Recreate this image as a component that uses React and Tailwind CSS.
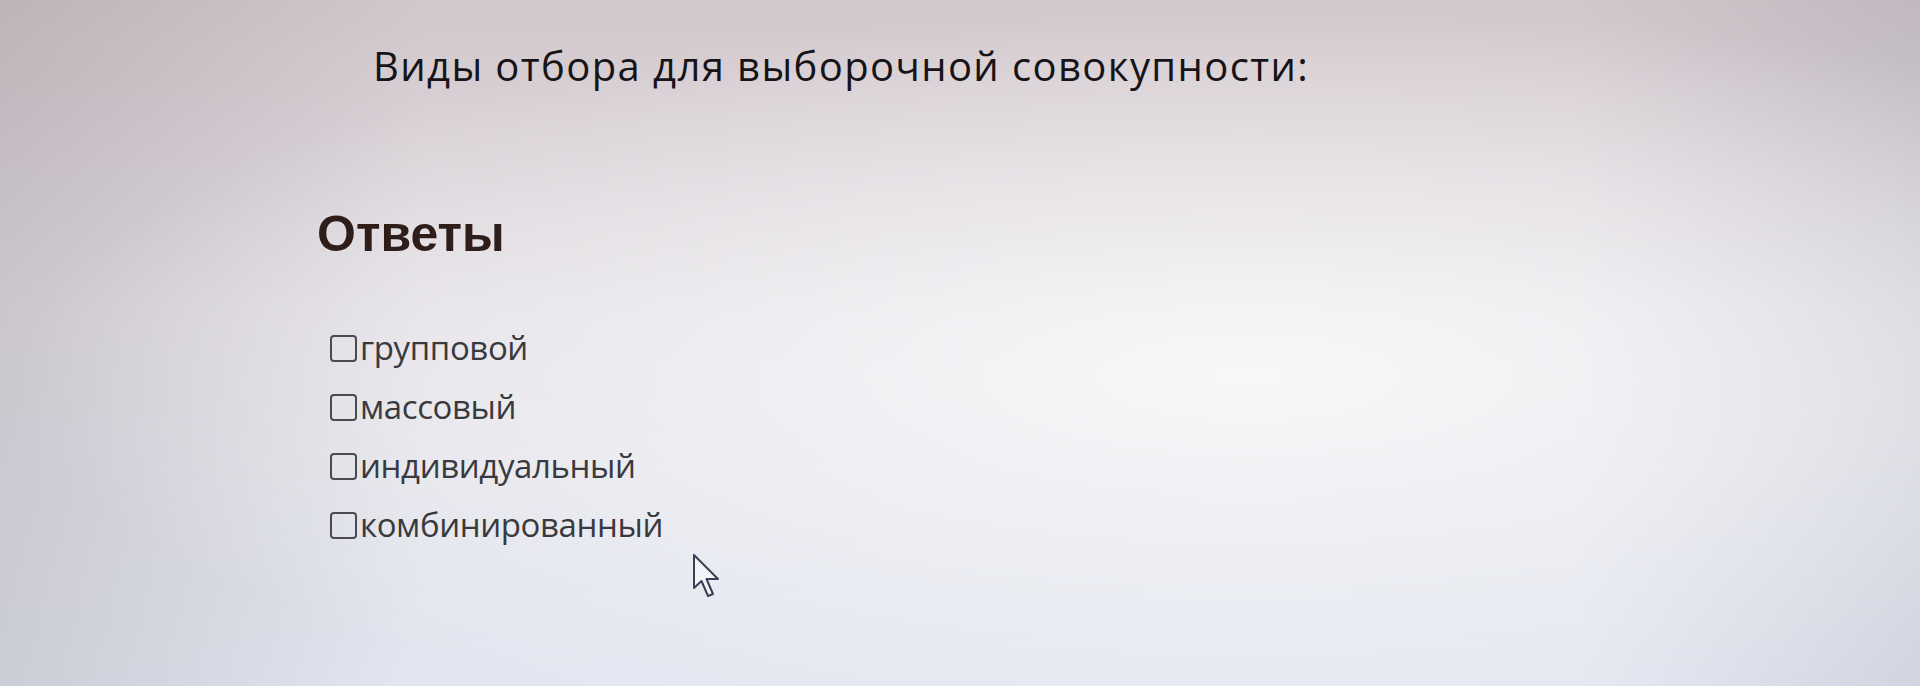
import React from "react";

const answers = ["групповой", "массовый", "индивидуальный", "комбинированный"];

const Cursor = () => (
  <svg
    className="absolute left-[692px] top-[553px]"
    width="32"
    height="46"
    viewBox="0 0 32 46"
    fill="none"
  >
    <path
      d="M2 2 L2 35 L9.5 28 L16 43 L21 41 L14.5 26 L26 26 Z"
      fill="#f4f4f8"
      stroke="#3a3f55"
      strokeWidth="2"
      strokeLinejoin="round"
    />
  </svg>
);

export default function App() {
  return (
    <div className="relative w-full h-[686px] overflow-hidden bg-[radial-gradient(ellipse_at_65%_55%,rgba(255,255,255,0.75)_0%,rgba(255,255,255,0)_70%),linear-gradient(to_right,rgba(110,100,110,0.2),rgba(0,0,0,0)_22%,rgba(0,0,0,0)_82%,rgba(100,105,130,0.15)),linear-gradient(to_bottom,#d2c7cb,#e2dfe5_45%,#e2e7f1)]">
      <div className="flex flex-col pl-[317px] pt-[42px]">
        <h2 className="ml-[56px] text-[40px] leading-[48px] text-[#161416] font-['Open_Sans',sans-serif] tracking-[1.4px]">
          Виды отбора для выборочной совокупности:
        </h2>

        <h1 className="mt-[118px] text-[50px] leading-[52px] font-bold text-[#2e1d19] font-['Liberation_Sans',Arial,sans-serif]">
          Ответы
        </h1>

        <div className="mt-[67px] ml-[13px] flex flex-col gap-[17px]">
          {answers.map((a) => (
            <label key={a} className="flex items-center gap-[3px] h-[42px]">
              <span className="w-[27px] h-[27px] border-2 border-[#4a4a50] rounded-[4px] bg-transparent shrink-0" />
              <span className="text-[33px] leading-[42px] text-[#3a3a3e] font-['Open_Sans',sans-serif] tracking-[-0.4px]">
                {a}
              </span>
            </label>
          ))}
        </div>
      </div>
      <Cursor />
    </div>
  );
}
